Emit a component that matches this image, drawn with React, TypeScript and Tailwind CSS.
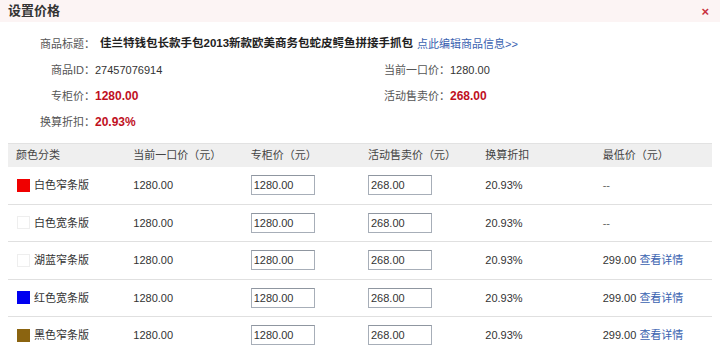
const FONT = { fontFamily: '"Liberation Sans", "Noto Sans CJK SC", sans-serif' };

type Sku = {
  name: string;
  swatch: string;
  minPrice?: string;
};

const SKUS: Sku[] = [
  { name: "白色窄条版", swatch: "bg-[#f00000] border-[#f00000]" },
  { name: "白色宽条版", swatch: "bg-white border-[#eeeeee]" },
  { name: "湖蓝窄条版", swatch: "bg-white border-[#eeeeee]", minPrice: "299.00" },
  { name: "红色宽条版", swatch: "bg-[#0000f0] border-[#0000f0]", minPrice: "299.00" },
  { name: "黑色窄条版", swatch: "bg-[#8b6410] border-[#8b6410]", minPrice: "299.00" },
];

const COLUMNS = ["颜色分类", "当前一口价（元）", "专柜价（元）", "活动售卖价（元）", "换算折扣", "最低价（元）"];

function PriceInput({ value }: { value: string }) {
  return (
    <input
      defaultValue={value}
      className="w-[64px] h-[20px] border border-[#a7aeb8] border-t-[#8f96a0] bg-white pl-[2px] text-[11px] text-[#333] outline-none"
      style={FONT}
    />
  );
}

export default function App() {
  return (
    <div className="w-[720px] h-[348px] overflow-hidden bg-white text-[11px] text-[#333]" style={FONT}>
      {/* title bar */}
      <div className="h-[22px] flex items-center justify-between pl-2 pr-[11px] bg-[#fcf4f4]">
        <span className="text-[13px] font-bold text-[#333]">设置价格</span>
        <span className="text-[13px] font-bold leading-none text-[#c8313f]">×</span>
      </div>

      {/* product info */}
      <div className="pt-[9px]">
        <div className="h-[26px] flex items-center">
          <span className="w-[95px] text-right text-[#555]">商品标题：</span>
          <span className="ml-[5px] font-bold text-[11.5px] text-[#222]">佳兰特钱包长款手包2013新款欧美商务包蛇皮鳄鱼拼接手抓包</span>
          <a className="ml-[4px] text-[#3a62b0]">点此编辑商品信息&gt;&gt;</a>
        </div>
        <div className="h-[26px] flex items-center">
          <div className="w-[384px] flex items-center">
            <span className="w-[95px] text-right text-[#555]">商品ID：</span>
            <span>27457076914</span>
          </div>
          <span className="text-[#555]">当前一口价：</span>
          <span>1280.00</span>
        </div>
        <div className="h-[26px] flex items-center">
          <div className="w-[384px] flex items-center">
            <span className="w-[95px] text-right text-[#555]">专柜价：</span>
            <span className="font-bold text-[12px] text-[#c0101e]">1280.00</span>
          </div>
          <span className="text-[#555]">活动售卖价：</span>
          <span className="font-bold text-[12px] text-[#c0101e]">268.00</span>
        </div>
        <div className="h-[26px] flex items-center">
          <span className="w-[95px] text-right text-[#555]">换算折扣：</span>
          <span className="font-bold text-[12px] text-[#c0101e]">20.93%</span>
        </div>
      </div>

      {/* sku table */}
      <div className="mx-2 mt-[8px]">
        <div className="grid grid-cols-6 h-[24px] items-center bg-[#efefef] border-t border-[#e2e2e2] text-[#444]">
          {COLUMNS.map((c) => (
            <div key={c} className="px-2">{c}</div>
          ))}
        </div>
        {SKUS.map((s) => (
          <div key={s.name} className="grid grid-cols-6 h-[37.5px] items-center border-b border-[#e0e0e0]">
            <div className="px-2 flex items-center gap-[4px]">
              <span className={`ml-[1px] w-[13px] h-[13px] border ${s.swatch}`} />
              <span>{s.name}</span>
            </div>
            <div className="px-2">1280.00</div>
            <div className="px-2"><PriceInput value="1280.00" /></div>
            <div className="px-2"><PriceInput value="268.00" /></div>
            <div className="px-2">20.93%</div>
            <div className="px-2">
              {s.minPrice ? (
                <>
                  {s.minPrice} <a className="text-[#3a62b0]">查看详情</a>
                </>
              ) : (
                <span className="text-[#666]">--</span>
              )}
            </div>
          </div>
        ))}
      </div>
    </div>
  );
}
